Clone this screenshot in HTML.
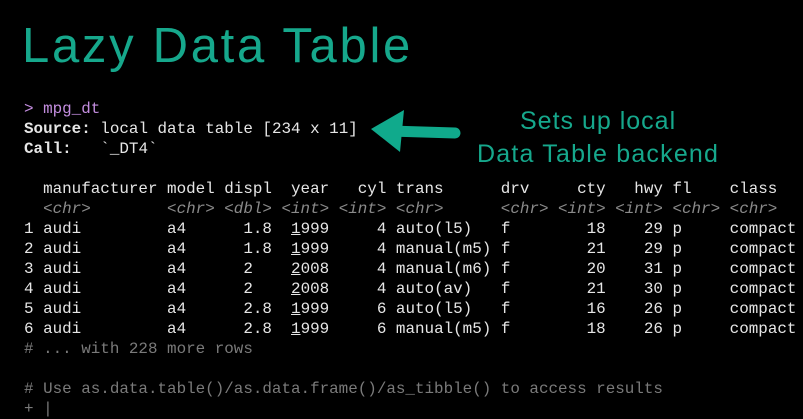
<html><head><style>
body{margin:0;background:#000;width:803px;height:406px;overflow:hidden;position:relative}
pre{position:absolute;left:24px;top:99px;margin:0;font-family:"Liberation Mono",monospace;font-size:15.9px;line-height:20px;color:#e6e6e6;white-space:pre}
.p{color:#c48ee0}.t{color:#8a8a8a;font-style:italic}.c{color:#7a7a7a}b{font-weight:bold}
.h{position:absolute;color:#16a88c;font-family:"Liberation Sans",sans-serif;white-space:nowrap}
</style></head><body>
<div class="h" style="left:22px;top:18px;font-size:49px;letter-spacing:2.7px">Lazy Data Table</div>
<div class="h" style="left:520px;top:107px;font-size:25px;letter-spacing:1px">Sets up local</div>
<div class="h" style="left:477px;top:140px;font-size:25px;letter-spacing:1.2px">Data Table backend</div>
<svg style="position:absolute;left:0;top:0" width="803" height="406"><path d="M390 131 L455 133" stroke="#10aa8c" stroke-width="11" stroke-linecap="round"/><path d="M371 129 L404 110 L400 152 Z" fill="#10aa8c"/></svg>
<pre><span class="p">&gt; mpg_dt</span>
<b>Source:</b> local data table [234 x 11]
<b>Call:</b>   `_DT4`

  manufacturer model displ  year   cyl trans      drv     cty   hwy fl    class
  <span class="t">&lt;chr&gt;        &lt;chr&gt; &lt;dbl&gt; &lt;int&gt; &lt;int&gt; &lt;chr&gt;      &lt;chr&gt; &lt;int&gt; &lt;int&gt; &lt;chr&gt; &lt;chr&gt;</span>
1 audi         a4      1.8  <u>1</u>999     4 auto(l5)   f        18    29 p     compact
2 audi         a4      1.8  <u>1</u>999     4 manual(m5) f        21    29 p     compact
3 audi         a4      2    <u>2</u>008     4 manual(m6) f        20    31 p     compact
4 audi         a4      2    <u>2</u>008     4 auto(av)   f        21    30 p     compact
5 audi         a4      2.8  <u>1</u>999     6 auto(l5)   f        16    26 p     compact
6 audi         a4      2.8  <u>1</u>999     6 manual(m5) f        18    26 p     compact
<span class="c"># ... with 228 more rows</span>

<span class="c"># Use as.data.table()/as.data.frame()/as_tibble() to access results</span>
<span class="c">+ |</span></pre>
</body></html>
